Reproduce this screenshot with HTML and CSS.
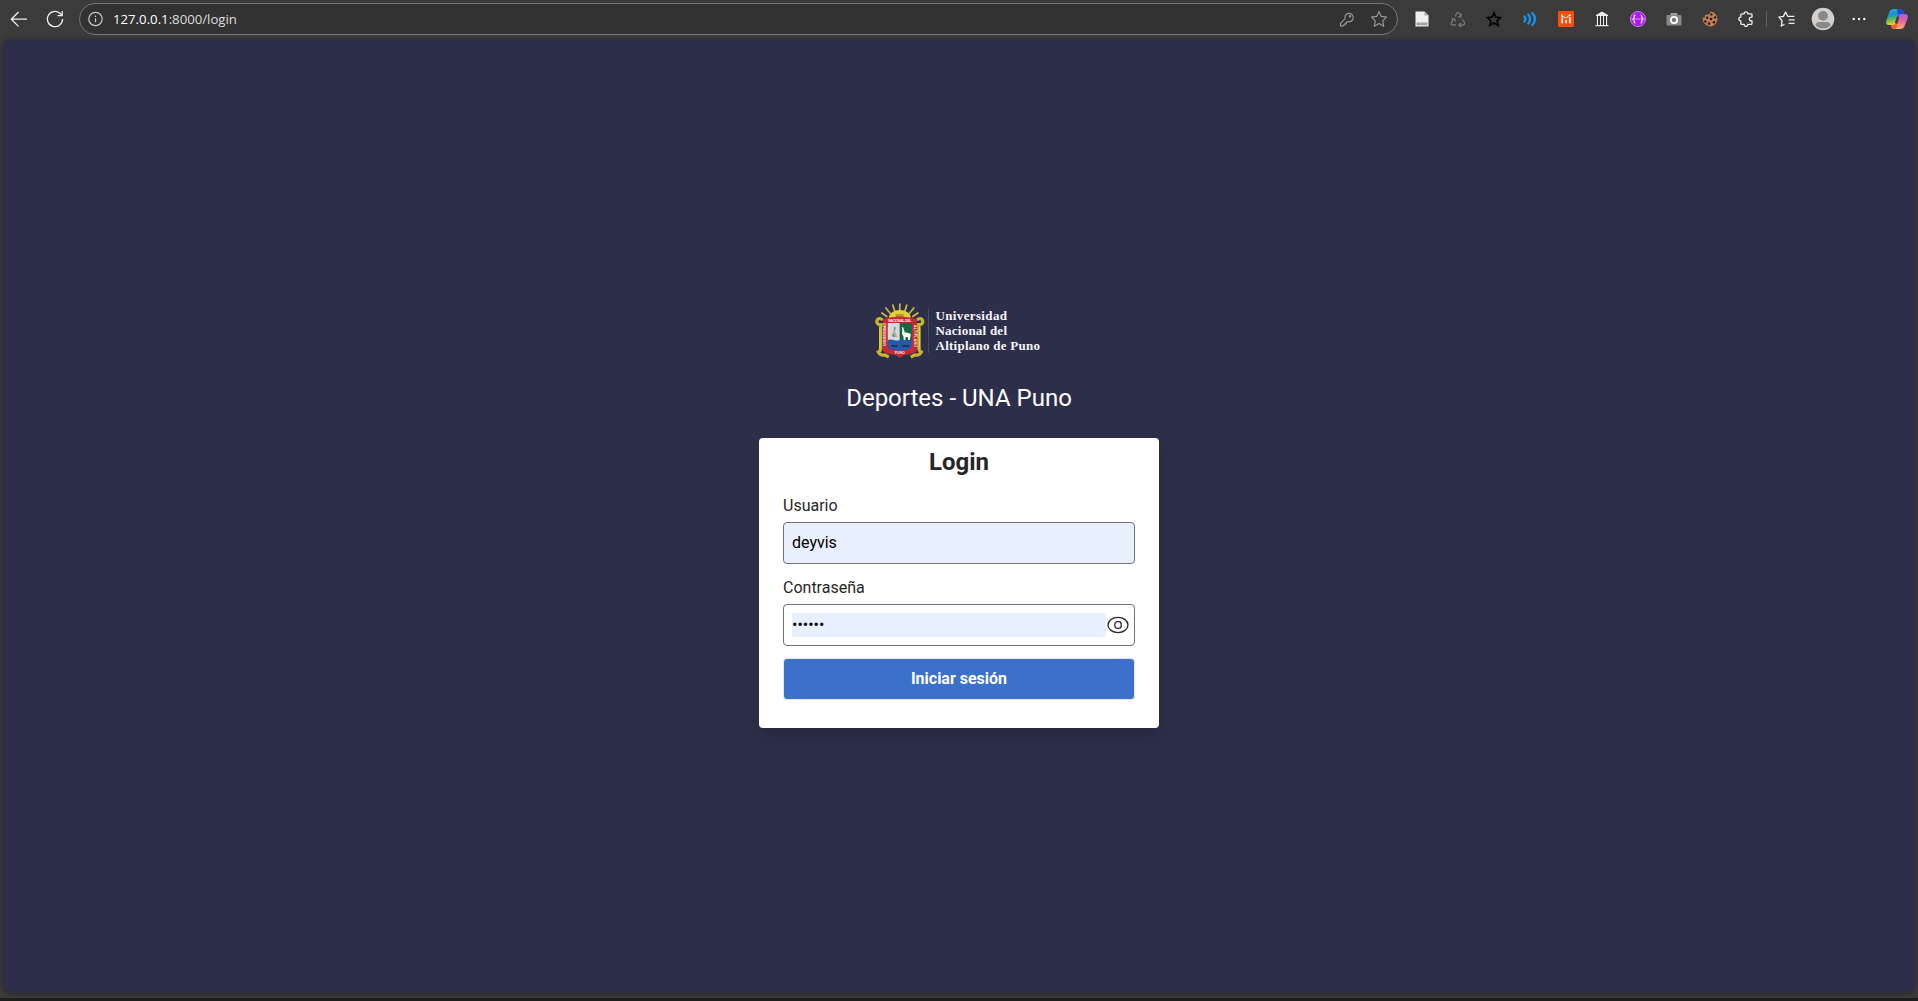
FILE: index.html
```html
<!DOCTYPE html>
<html lang="es">
<head>
<meta charset="utf-8">
<title>Login</title>
<link rel="stylesheet" href="styles.css">
</head>
<body>
<header class="toolbar">
  <span class="slot"><svg class="line" width="18" height="18" viewBox="0 0 18 18"><path d="M17 9.200H1.500M8.500 2 1.300 9.200l7.200 7.200"/></svg></span>
  <span class="slot"><svg class="line" width="18" height="18" viewBox="0 0 18 18"><path d="M16.600 9A7.600 7.600 0 1 1 13.800 3.200L16 5.300M16.200 1v4.600h-4.700"/></svg></span>
  <div class="address">
    <svg class="info" width="16" height="16" viewBox="0 0 16 16"><circle cx="7.500" cy="8" r="6.700"/><path d="M7.500 7.200v4M7.500 4.600v1.300"/></svg>
    <span class="url">127.0.0.1<span class="path">:8000/login</span></span>
    <svg class="muted key" width="16" height="16" viewBox="0 0 16 16"><path d="M6 7.600a4.200 4.200 0 1 1 3 3L7.600 11v1.300H6V14H4.200v1H1.500v-2.700z"/><circle cx="11" cy="5.200" r=".7"/></svg>
    <svg class="muted star" width="18" height="18" viewBox="0 0 18 18"><path d="m9 1.500 2.300 4.900 5.300.7-3.900 3.700 1 5.400L9 13.600l-4.700 2.600 1-5.400-3.900-3.700 5.300-.7z"/></svg>
  </div>
  <span class="slot"><svg width="16" height="18" viewBox="0 0 16 18"><path d="M1.500 1.500h9l4 4v11h-13z" fill="#eee"/><path d="M10.500 1.500v4h4z" fill="#aaa"/><path d="M3 13h10v1.800H3z" fill="#bbb" stroke="#888" stroke-width=".8"/></svg></span>
  <span class="slot"><svg class="recycle" width="16" height="16" viewBox="0 0 16 16"><path d="M5 5.500 7 2q1-1 2 0l2 3.500M11.200 2.600v3.200H8M3.700 7.500 1.300 12q-.3 1.800 1.200 2H6M1.500 8h3l1 2.500M9 14h4.500q1.500-.5 1.100-2L12.500 8.500M11 11.800 8.700 14l2.300 2"/></svg></span>
  <span class="slot"><svg width="16" height="16" viewBox="0 0 16 16"><path d="m8 1.800 1.900 4.300 4.700.5-3.500 3.200 1 4.700L8 12.100l-4.100 2.400 1-4.700L1.400 6.600l4.700-.5z" fill="none" stroke="#050505" stroke-width="1.700"/></svg></span>
  <span class="slot"><svg width="16" height="16" viewBox="0 0 16 16" fill="none" stroke="#1593f5" stroke-width="2.300" stroke-linecap="round"><path d="M2.500 5.500q2 2.500 0 5M6.300 3.500q3.600 4.500 0 9M10.300 2q5.400 6 0 12"/></svg></span>
  <span class="slot"><svg width="16" height="16" viewBox="0 0 16 16"><rect width="16" height="16" rx="1" fill="#ff4d08"/><path d="M4.200 12.300V6.500M8 12.300V9M11.800 12.300V6" fill="none" stroke="#fff" stroke-width="1.700"/><path d="m3.500 5 4.500 2 4-3" fill="none" stroke="#fff" stroke-width="1"/><circle cx="4" cy="4.500" r="1" fill="#fff"/><circle cx="12" cy="4" r="1" fill="#fff"/></svg></span>
  <span class="slot"><svg width="16" height="16" viewBox="0 0 16 16"><path d="M2 5.200V4l6-3.500L14 4v1.200z" fill="#eee"/><path d="M2.500 5h11v9h-11z" fill="#161616"/><path d="M3.500 5v9M6.500 5v9M9.500 5v9M12.500 5v9" stroke="#f2f2f2" stroke-width="1.300"/><path d="M1.500 14h13v1.200h-13z" fill="#eee"/></svg></span>
  <span class="slot"><svg width="16" height="16" viewBox="0 0 16 16"><circle cx="8" cy="8" r="7.500" fill="#ad19ed" stroke="#d57bf6"/><path d="M5.500 4Q4 4 4.200 6q.1 1.600-1.200 2 1.300.4 1.200 2-.2 2 1.300 2M10.500 4q1.500 0 1.300 2-.1 1.600 1.200 2-1.300.4-1.200 2 .2 2-1.300 2" fill="none" stroke="#fff" stroke-width="1.200"/><path d="M5.600 8h1.100m.8 0h1m.8 0h1.100" stroke="#fff" stroke-width="1.200"/></svg></span>
  <span class="slot"><svg width="16" height="16" viewBox="0 0 16 16"><path d="M1.500 4H4l1-2h6l1 2h2.500q1 0 1 1v8.500q0 1-1 1h-13q-1 0-1-1V5q0-1 1-1z" fill="#888"/><path d="M5 2h6v2H5z" fill="#a1a1a1"/><circle cx="8" cy="8.900" r="3.100" fill="#777" stroke="#fff" stroke-width="1.800"/></svg></span>
  <span class="slot"><svg width="16" height="16" viewBox="0 0 16 16"><path d="M8.500.6a7.400 7.400 0 1 1-7.700 6L3 6.300V3.700h2.500L7.300 3z" fill="#c57b53"/><g fill="#24201e"><circle cx="9.300" cy="3.400" r="1.200"/><circle cx="5.200" cy="6.700" r="1.300"/><circle cx="9" cy="8" r="1.300"/><circle cx="13" cy="6.400" r="1.200"/><circle cx="3.300" cy="10.500" r="1.200"/><circle cx="7" cy="12.600" r="1.300"/><circle cx="12" cy="11.200" r="1.300"/></g></svg></span>
  <span class="slot"><svg class="line" width="16" height="16" viewBox="0 0 16 16"><path d="M3.700 2.800h2.500q0-2 1.800-2t1.800 2h3.300q.9 0 .9.900v2.400q-2.700 0-2.700 1.900t2.700 1.900v2.600q0 .9-.9.900H9.800q0 2-1.800 2t-1.800-2H3.700q-.9 0-.9-.9V9.900Q.8 9.800.8 8t2-1.900V3.700q0-.9.900-.9z"/></svg></span>
  <i class="divider"></i>
  <span class="slot"><svg class="line" width="18" height="18" viewBox="0 0 18 18"><path d="M6.500 14.200 3.300 16l.8-5.200L.9 7.100l4.500-.7L7.600 2l2.100 4.300h6.600M10.600 9.800h6M10.600 13.300h6"/></svg></span>
  <span class="slot"><svg width="24" height="24" viewBox="0 0 24 24"><circle cx="12" cy="12" r="11.300" fill="#d2d0ce"/><circle cx="12" cy="8.900" r="4.900" fill="#8b8886"/><path d="M4.500 18.500Q4.500 15 8 15h8q3.500 0 3.500 3.500a10.600 10.600 0 0 1-15 0" fill="#8b8886"/></svg></span>
  <span class="slot"><svg width="16" height="16" viewBox="0 0 16 16" fill="#f2f2f2"><circle cx="2.700" cy="8" r="1.200"/><circle cx="8" cy="8" r="1.200"/><circle cx="13.300" cy="8" r="1.200"/></svg></span>
  <span class="slot copilot"><svg width="24" height="24" viewBox="0 0 24 24">
    <defs>
      <linearGradient id="cool" x2=".2" y2="1"><stop stop-color="#28a9ed"/><stop offset=".4" stop-color="#1792c7"/><stop offset=".7" stop-color="#62b958"/><stop offset="1" stop-color="#f1cf29"/></linearGradient>
      <linearGradient id="warm" x2="0" y2="1"><stop stop-color="#a05bec"/><stop offset=".5" stop-color="#ef6795"/><stop offset="1" stop-color="#ffb35f"/></linearGradient>
    </defs>
    <path d="M9 2h6.500q2 0 2.700 2.500L19 7h-3q-2 0-2.800 2.600L11 16.500Q10.300 18 8 18H4Q.2 18 1.300 13.500L4.300 5Q5.500 2 9 2z" fill="url(#cool)"/>
    <path d="M12 2h3.500q2 0 2.700 2.500L19 7h-3q-2 0-2.800 2.600z" fill="#214ed0"/>
    <path d="M15.500 7H20q3.800 0 2.600 4.500l-2.800 7Q18.500 22 15 22H9q-2 0-2.700-2.500L6 18h2q2.300 0 3-1.500l2.200-6.900Q14 7 15.500 7z" fill="url(#warm)"/>
    <path d="M6 18h2q2.300 0 3-1.500l1-2.500.3 4Q12 22 9 22 7 22 6.300 19.500z" fill="#f06136"/>
    <path d="m13.200 9.600-2.200 6.900" stroke="#3b3b3b" stroke-width="2.500"/>
  </svg></span>
</header>

<main class="page">
  <svg class="brand" width="168" height="58" viewBox="0 0 168 58" role="img">
    <g transform="translate(.8)">
    <g stroke="#cdb649" stroke-width="1.700" stroke-linecap="round"><path d="M24 9V2M19 9.500 17 3M29 9.500 31 3M14.500 11.500 10 6M33.500 11.500 38 6M11 14.500 6 11M37 14.500l5-3.500"/></g>
    <path d="M13 16a11 8 0 0 1 22 0z" fill="#e5cd3c"/>
    <path d="M20 16v-4h8v4" fill="#b99926"/>
    <path d="M7 18q-4-3-5.500 0Q0 21 3 22.500h4M41 18q4-3 5.500 0Q48 21 45 22.500h-4M5 22v24q0 3-2.500 4 2 4 6.500 3l4 2M43 22v24q0 3 2.500 4-2 4-6.500 3l-4 2" fill="none" stroke="#c5b62c" stroke-width="3.200"/>
    <path d="M4 25v22M44 25v22" stroke="#f1df52"/>
    <path d="M7 17q17-5 34 0v32q-3 3-9 3.500-5 0-8 3.500-3-3.500-8-3.500-6-.5-9-3.500z" fill="#c82735"/>
    <path d="M12 21h12v19H12z" fill="#d3d9df"/><path d="M24 21h12v19H24z" fill="#12683f"/>
    <path d="M12 38q3-1 6 0t6 0 6 0 6 0v7q-2 3-7 3-3 0-5 2-2-2-5-2-5 0-7-3z" fill="#2859a8"/>
    <path d="M15 43h7l-1 2h-5zm11 0h8l-1 2h-6z" fill="#163763"/>
    <path d="m16 35 1.500-6 1-3 1 4 2 5z" fill="#b1b37b"/><path d="m16.500 32 2 3M19 25v3" stroke="#286cb0"/>
    <path d="m26 25 1.500.5 1.500 5q3-.5 6 1.500l-1 6h-1.500l-.5-3h-2l-.5 3H28l-.5-4q-2-2-1-6z" fill="#f7f9ef"/>
    <g class="motto"><text x="12.500" y="20" textLength="23">NACIONAL DEL</text><text transform="translate(10.500 44) rotate(-90)" textLength="23">UNIVERSIDAD</text><text transform="translate(37.800 23) rotate(90)" textLength="22">ALTIPLANO</text><text x="19" y="52" textLength="10">PUNO</text></g>
    </g>
    <path d="M53.500 7v44" stroke="#494961"/>
    <g class="brand-name"><text x="60.500" y="17.600" textLength="71.500">Universidad</text><text x="60.500" y="32.600" textLength="71.500">Nacional del</text><text x="60.500" y="47.600" textLength="104.500">Altiplano de Puno</text></g>
  </svg>
  <h1 class="app-name">Deportes - UNA Puno</h1>
  <form class="card">
    <h2 class="card-title">Login</h2>
    <label class="label" for="user">Usuario</label>
    <input class="field" id="user" type="text" value="deyvis">
    <label class="label" for="password">Contraseña</label>
    <div class="password-box">
      <input class="password" id="password" type="password" value="123456">
      <svg class="eye" width="22" height="18" viewBox="0 0 22 18"><ellipse cx="11" cy="9" rx="10" ry="7.600"/><rect x="7.800" y="5.700" width="6.400" height="6.600" rx="2.600"/></svg>
    </div>
    <button class="submit" type="button">Iniciar sesión</button>
  </form>
</main>
</body>
</html>
```
FILE: styles.css
```css
* { box-sizing: border-box; }
body {
  margin: 0;
  height: 1001px;
  display: flex;
  flex-direction: column;
  background: #3b3b3b;
  border-bottom: 3px solid #1e1d1d;
  font-family: Roboto, sans-serif;
  overflow: hidden;
}
svg { display: block; flex: none; }
.toolbar {
  height: 39px;
  display: flex;
  align-items: center;
  padding: 0 3px 1px 1px;
}
.slot {
  width: 36px;
  height: 36px;
  flex: none;
  display: flex;
  align-items: center;
  justify-content: center;
}
.line { fill: none; stroke: #eeeeee; stroke-width: 1.3; stroke-linejoin: round; }
.address {
  width: 1319px;
  height: 32px;
  flex: none;
  margin: 0 6px;
  padding: 0 9px 0 8px;
  display: flex;
  align-items: center;
  background: #323232;
  border: 1px solid #777777;
  border-radius: 16px;
}
.info { fill: none; stroke: #c8c8c8; stroke-width: 1.2; }
.url {
  margin-left: 9px;
  flex: 1;
  color: #ffffff;
  font: 13.2px "Open Sans", sans-serif;
}
.path { color: #dddddd; }
.muted { fill: none; stroke: #9b9b9b; stroke-width: 1.1; stroke-linejoin: round; }
.key { margin-right: 15px; }
.recycle { fill: none; stroke: #777777; stroke-width: 1.3; }
.divider { width: 1px; height: 16px; margin: 0 2px; background: #606060; }
.copilot { margin-left: 2px; }
.page {
  flex: 1;
  margin: 0 3px 5px;
  padding-top: 263px;
  display: flex;
  flex-direction: column;
  align-items: center;
  background: #2d2e49;
  border-radius: 8px;
  box-shadow: 0 1px 4px #252525;
}
.motto { fill: #ffe9e4; font: bold 3.5px "Liberation Sans", sans-serif; }
.brand-name { fill: #f5f5f8; font: bold 13px "Liberation Serif", serif; }
.app-name {
  margin: 23px 0 0;
  color: #ffffff;
  font-size: 24px;
  font-weight: 400;
  line-height: 30px;
}
.card {
  width: 400px;
  height: 290px;
  margin-top: 25px;
  padding: 8px 24px 24px;
  display: flex;
  flex-direction: column;
  background: #ffffff;
  border-radius: 4px;
  box-shadow: 0 8px 16px rgba(0, 0, 0, .15);
  color: #262626;
}
.card-title {
  margin: 0 0 16px;
  text-align: center;
  font-size: 24px;
  font-weight: 700;
  line-height: 32px;
}
.label { height: 28px; font-size: 16px; line-height: 24px; }
.field, .password-box {
  height: 42px;
  flex: none;
  border: 1px solid #6b7280;
  border-radius: 4px;
}
.field {
  width: 100%;
  margin-bottom: 12px;
  padding: 7px 8px 9px;
  background: #e8f0fe;
  color: #000000;
  font: 16px Roboto, sans-serif;
}
.password-box { display: flex; align-items: center; padding: 0 5px 0 8px; }
.password {
  width: 314px;
  height: 24px;
  padding: 0 0 2px;
  border: 0;
  background: #e8f0fe;
  color: #000000;
  font: 16px Roboto, sans-serif;
}
.eye { margin-left: 1px; fill: none; stroke: #292929; stroke-width: 1.3; }
.submit {
  height: 42px;
  flex: none;
  margin-top: 12px;
  padding: 0 0 2px;
  background: #3b71ca;
  border: 1px solid #e5e7eb;
  border-radius: 4px;
  color: #ffffff;
  font: 700 16px Roboto, sans-serif;
}
```
